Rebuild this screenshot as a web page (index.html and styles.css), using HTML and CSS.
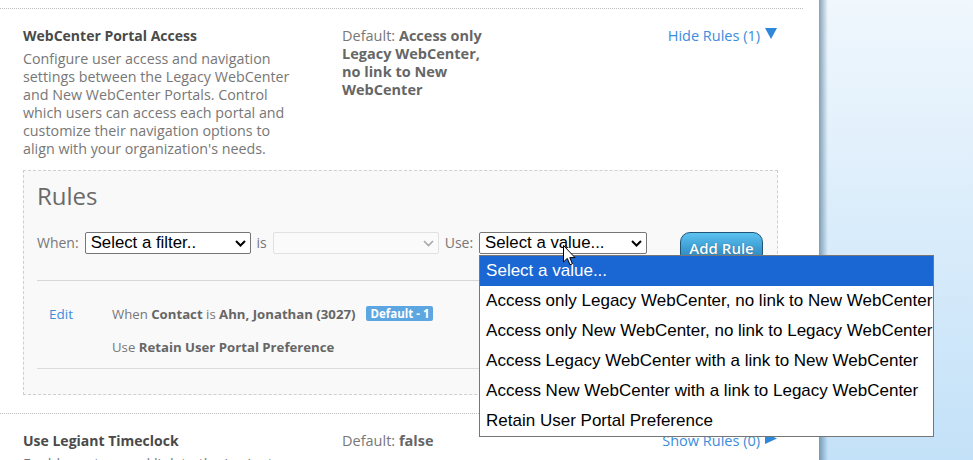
FILE: index.html
```html
<!DOCTYPE html>
<html>
<head>
<meta charset="utf-8">
<link rel="stylesheet" href="styles.css">
</head>
<body>
<div class="panel">
  <div class="setting">
    <div class="setting-row">
      <div class="col-info">
        <div class="title">WebCenter Portal Access</div>
        <div class="desc">Configure user access and navigation settings between the Legacy WebCenter and New WebCenter Portals. Control which users can access each portal and customize their navigation options to align with your organization's needs.</div>
      </div>
      <div class="col-default">Default: <b>Access only Legacy WebCenter, no link to New WebCenter</b></div>
      <div class="col-toggle"><a class="link">Hide Rules (1)</a><svg class="tri" width="12" height="11" viewBox="0 0 12 11"><polygon points="0,0 12,0 6,11" fill="#2f87d9"/></svg></div>
    </div>
    <div class="rules">
      <div class="rules-title">Rules</div>
      <div class="filter-row">
        <span class="lbl">When:</span>
        <div class="select"><span>Select a filter..</span><svg width="11" height="7" viewBox="0 0 11 7"><polyline points="1,1 5.5,5.5 10,1" fill="none" stroke="#000" stroke-width="2"/></svg></div>
        <span class="lbl">is</span>
        <div class="select disabled"><span></span><svg width="11" height="7" viewBox="0 0 11 7"><polyline points="1,1 5.5,5.5 10,1" fill="none" stroke="#a8a8a8" stroke-width="1.6"/></svg></div>
        <span class="lbl">Use:</span>
        <div class="select-wrap">
          <div class="select"><span>Select a value...</span><svg width="11" height="7" viewBox="0 0 11 7"><polyline points="1,1 5.5,5.5 10,1" fill="none" stroke="#000" stroke-width="2"/></svg></div>
          <div class="options">
            <div class="opt active">Select a value...</div>
            <div class="opt">Access only Legacy WebCenter, no link to New WebCenter</div>
            <div class="opt">Access only New WebCenter, no link to Legacy WebCenter</div>
            <div class="opt">Access Legacy WebCenter with a link to New WebCenter</div>
            <div class="opt">Access New WebCenter with a link to Legacy WebCenter</div>
            <div class="opt">Retain User Portal Preference</div>
          </div>
          <svg class="cursor" width="13" height="21" viewBox="0 0 13 21"><path d="M0.5,0.5 L0.5,17 L4.3,13.4 L7,19.8 L9.4,18.8 L6.8,12.6 L12,12.6 Z" fill="#fff" stroke="#000" stroke-width="1" stroke-linejoin="round"/></svg>
        </div>
        <div class="btn">Add Rule</div>
      </div>
      <div class="rule">
        <a class="link edit">Edit</a>
        <div class="rule-text">
          <div class="rule-line">When <b>Contact</b> is <b>Ahn, Jonathan (3027)</b><span class="badge">Default - 1</span></div>
          <div class="rule-line">Use <b>Retain User Portal Preference</b></div>
        </div>
      </div>
    </div>
  </div>
  <div class="setting">
    <div class="setting-row">
      <div class="col-info">
        <div class="title">Use Legiant Timeclock</div>
        <div class="desc">Enable custom and link to the Legiant timeclock for users.</div>
      </div>
      <div class="col-default">Default: <b>false</b></div>
      <div class="col-toggle"><a class="link">Show Rules (0)</a><svg class="tri" width="12" height="11" viewBox="0 0 12 11"><polygon points="0,0 12,5.5 0,11" fill="#2f87d9"/></svg></div>
    </div>
  </div>
</div>
<div class="side"></div>
</body>
</html>
```
FILE: styles.css
```css
html, body {
  margin: 0;
  height: 100%;
}
body {
  display: flex;
  height: 460px;
  overflow: hidden;
  font-family: "Open Sans", "Noto Sans", sans-serif;
  font-size: 14.3px;
  color: #777;
}
.panel {
  width: 819px;
  flex: none;
  background: #fff;
  padding-top: 8px;
  box-sizing: border-box;
}
.side {
  flex: 1;
  background:
    linear-gradient(to right, rgba(60, 105, 135, 0.6), rgba(60, 105, 135, 0) 9px),
    linear-gradient(to bottom, #f0f7fd, #c3e1f8);
}
.setting {
  border-top: 1px dotted #bdbdbd;
  margin-right: 16px;
}
.setting-row {
  display: grid;
  grid-template-columns: 278px 145px 1fr;
  column-gap: 41px;
  padding: 18px 26px 0 23px;
}
.title {
  font-weight: bold;
  font-size: 14px;
  color: #4a4a4a;
  line-height: 18px;
}
.desc {
  margin-top: 5px;
  line-height: 18px;
}
.col-default {
  font-size: 14.5px;
  line-height: 18px;
}
.col-default b {
  color: #666;
}
.col-toggle {
  display: flex;
  justify-content: flex-end;
  align-items: flex-start;
  gap: 5px;
  font-size: 14.5px;
  line-height: 18px;
}
.tri {
  margin-top: 1px;
}
.link {
  color: #3b8ddb;
  cursor: pointer;
}
.rules {
  margin: 12px 25px 18px 23px;
  border: 1px dashed #cfcfcf;
  background: #f9f9f9;
  padding: 11px 14px 25px 13px;
}
.rules-title {
  font-size: 24px;
  line-height: 28px;
  color: #6a6a6a;
}
.filter-row {
  display: flex;
  align-items: flex-start;
  gap: 6px;
  margin-top: 22px;
  padding-bottom: 16px;
  border-bottom: 1px solid #d6d6d6;
}
.lbl {
  line-height: 22px;
  font-size: 14px;
  color: #777;
}
.select {
  width: 168px;
  height: 22px;
  box-sizing: border-box;
  border: 1px solid #767676;
  border-radius: 2px;
  background: #fff;
  display: flex;
  align-items: center;
  justify-content: space-between;
  padding: 0 4px 0 5px;
  font-family: "Liberation Sans", Arial, sans-serif;
  font-size: 16.8px;
  color: #000;
}
.select.disabled {
  border-color: #e1e1e1;
  background: #fafafa;
}
.select-wrap {
  position: relative;
}
.options {
  position: absolute;
  left: 0;
  top: 23px;
  width: 455px;
  box-sizing: border-box;
  border: 1px solid #767676;
  background: #fff;
  z-index: 5;
  font-family: "Liberation Sans", Arial, sans-serif;
  font-size: 17px;
  color: #000;
}
.opt {
  height: 30px;
  line-height: 30px;
  padding-left: 6px;
  white-space: nowrap;
}
.opt.active {
  background: #1a66d2;
  color: #fff;
}
.cursor {
  position: absolute;
  left: 84px;
  top: 13px;
  z-index: 6;
}
.btn {
  margin-left: 27px;
  width: 84px;
  height: 32px;
  box-sizing: border-box;
  border: 1px solid #1f5677;
  border-radius: 10px;
  background: linear-gradient(to bottom, #5cc2f0, #3b9ad0 55%, #2a7db0);
  color: #fff;
  font-size: 15px;
  font-weight: 600;
  text-align: center;
  line-height: 30px;
  text-shadow: 0 0 1px rgba(0, 40, 70, 0.6);
}
.rule {
  display: flex;
  padding: 24px 0 12px 12px;
  border-bottom: 1px solid #dcdcdc;
  font-size: 13.2px;
}
.edit {
  width: 63px;
  line-height: 18px;
  font-size: 13.5px;
}
.rule-line {
  line-height: 18px;
}
.rule-line + .rule-line {
  margin-top: 15px;
}
.rule-line b {
  color: #666;
}
.badge {
  display: inline-block;
  margin-left: 11px;
  background: #5ca6e1;
  color: #fff;
  font-weight: bold;
  font-size: 11.5px;
  line-height: 15px;
  padding: 0 4px;
  border-radius: 2px;
  vertical-align: 1px;
}
```
